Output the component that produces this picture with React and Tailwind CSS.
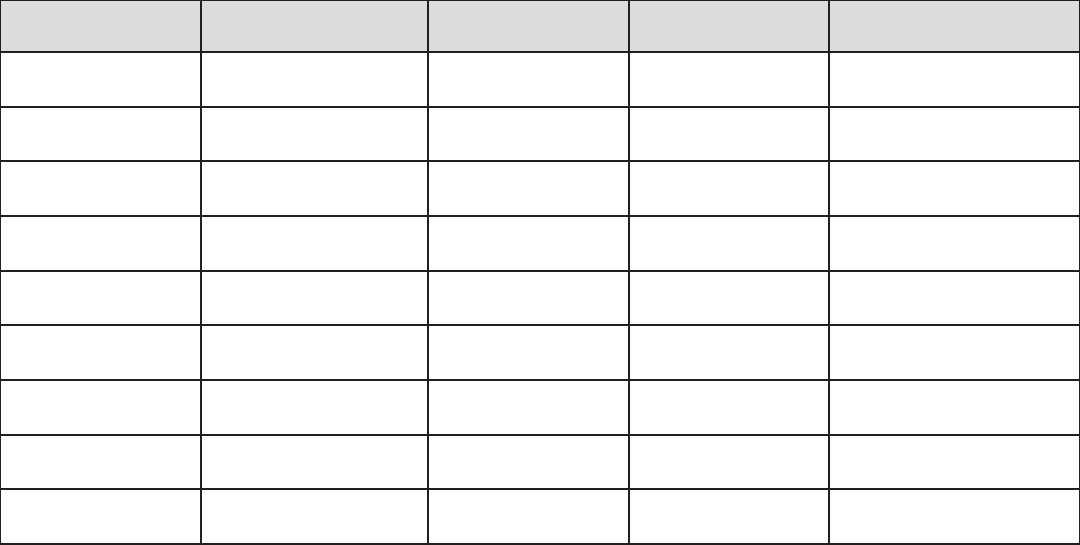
export default function App() {
  const cols = 5;
  const rows = 9;
  const header = Array.from({ length: cols });
  const body = Array.from({ length: rows * cols });
  return (
    <div className="w-[1080px] h-[545px] bg-[#231f20] pt-px pl-px pr-px pb-[2px]">
      <div className="grid h-full gap-[2px] grid-cols-[199px_225px_199px_198px_249px] grid-rows-[50px_repeat(9,1fr)]">
        {header.map((_, i) => (
          <div key={"h" + i} className="bg-[#dcdcdc]" />
        ))}
        {body.map((_, i) => (
          <div key={"b" + i} className="bg-white" />
        ))}
      </div>
    </div>
  );
}
